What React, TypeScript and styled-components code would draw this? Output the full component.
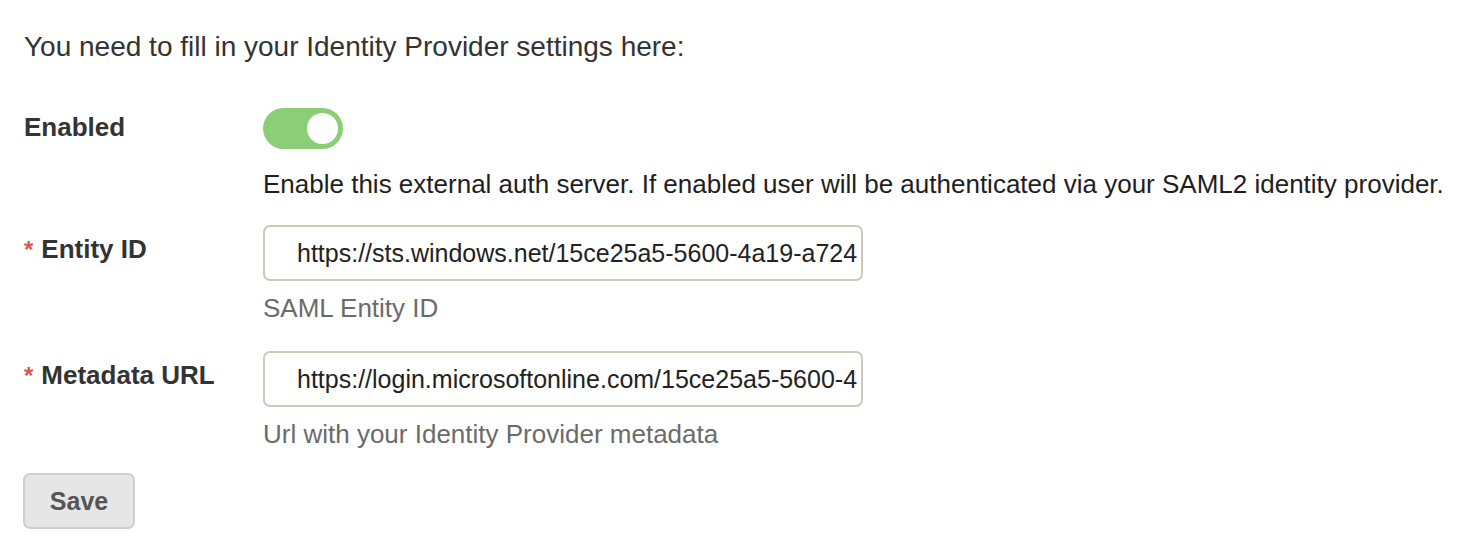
import React, { useState } from "react";
import styled, { createGlobalStyle } from "styled-components";

const GlobalStyle = createGlobalStyle`
  html, body {
    margin: 0;
    padding: 0;
    background: #ffffff;
  }
  body {
    font-family: "Liberation Sans", Arial, Helvetica, sans-serif;
    color: #333333;
  }
`;

const Page = styled.div`
  padding: 30px 24px 0 24px;
`;

const Intro = styled.p`
  margin: 0 0 44px 0;
  font-size: 28px;
  line-height: 34px;
  color: #333333;
`;

const Form = styled.form`
  display: flex;
  flex-direction: column;
`;

const Row = styled.div<{ $gap: number }>`
  display: grid;
  grid-template-columns: 239px auto;
  align-items: start;
  margin-bottom: ${(p) => p.$gap}px;
`;

const Label = styled.label<{ $top: number }>`
  display: flex;
  align-items: baseline;
  gap: 8px;
  padding-top: ${(p) => p.$top}px;
  font-size: 26px;
  line-height: 34px;
  font-weight: 700;
  color: #333333;
`;

const Star = styled.span`
  color: #e2534f;
  font-size: 24px;
  font-weight: 700;
`;

const Control = styled.div`
  display: flex;
  flex-direction: column;
  align-items: flex-start;
`;

const Track = styled.button<{ $on: boolean }>`
  position: relative;
  width: 80px;
  height: 41px;
  border: none;
  border-radius: 21px;
  padding: 0;
  margin: 0;
  cursor: pointer;
  background: ${(p) => (p.$on ? "#8ccd78" : "#cccccc")};
`;

const Knob = styled.span<{ $on: boolean }>`
  position: absolute;
  top: 5px;
  left: ${(p) => (p.$on ? "44px" : "5px")};
  width: 31px;
  height: 31px;
  border-radius: 50%;
  background: #ffffff;
`;

const Description = styled.div`
  margin-top: 18px;
  font-size: 26px;
  line-height: 34px;
  color: #1e1e1e;
  white-space: nowrap;
`;

const TextInput = styled.input`
  box-sizing: border-box;
  width: 600px;
  height: 56px;
  padding: 0 2px 0 32px;
  border: 2px solid #cdc9ba;
  border-radius: 7px;
  background: #ffffff;
  font-family: "Liberation Sans", Arial, Helvetica, sans-serif;
  font-size: 25px;
  color: #222222;
  outline: none;
`;

const Help = styled.div`
  margin-top: 10px;
  font-size: 26px;
  line-height: 34px;
  color: #6b6b6b;
`;

const SaveButton = styled.button`
  box-sizing: border-box;
  width: 112px;
  height: 56px;
  margin-left: -1px;
  border: 2px solid #cfcfcf;
  border-radius: 7px;
  background: #e6e6e6;
  font-family: "Liberation Sans", Arial, Helvetica, sans-serif;
  font-size: 25px;
  font-weight: 700;
  color: #555555;
  cursor: pointer;
`;

export default function App() {
  const [enabled, setEnabled] = useState(true);
  return (
    <>
      <GlobalStyle />
      <Page>
        <Intro>You need to fill in your Identity Provider settings here:</Intro>
        <Form onSubmit={(e) => e.preventDefault()}>
          <Row $gap={24}>
            <Label $top={2}>Enabled</Label>
            <Control>
              <Track type="button" $on={enabled} onClick={() => setEnabled(!enabled)}>
                <Knob $on={enabled} />
              </Track>
              <Description>
                Enable this external auth server. If enabled user will be authenticated via your SAML2 identity provider.
              </Description>
            </Control>
          </Row>
          <Row $gap={26}>
            <Label $top={7}>
              <Star>*</Star>Entity ID
            </Label>
            <Control>
              <TextInput readOnly value="https://sts.windows.net/15ce25a5-5600-4a19-a724" />
              <Help>SAML Entity ID</Help>
            </Control>
          </Row>
          <Row $gap={22}>
            <Label $top={7}>
              <Star>*</Star>Metadata URL
            </Label>
            <Control>
              <TextInput readOnly value="https://login.microsoftonline.com/15ce25a5-5600-4" />
              <Help>Url with your Identity Provider metadata</Help>
            </Control>
          </Row>
          <div>
            <SaveButton type="submit">Save</SaveButton>
          </div>
        </Form>
      </Page>
    </>
  );
}
